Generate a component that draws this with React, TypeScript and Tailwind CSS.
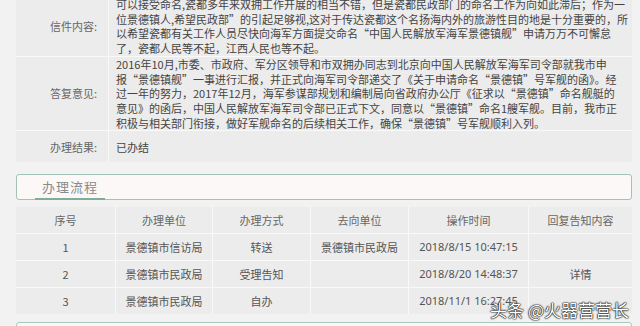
const letterLines = [
  "可以接受命名,瓷都多年来双拥工作开展的相当不错，但是瓷都民政部门的命名工作为向如此滞后；作为一",
  "位景德镇人,希望民政部”的引起足够视,这对于传达瓷都这个名扬海内外的旅游性目的地是十分重要的，所",
  "以希望瓷都有关工作人员尽快向海军方面提交命名“中国人民解放军海军景德镇舰”申请万万不可懈怠",
  "了，瓷都人民等不起，江西人民也等不起。",
];

const replyLines = [
  "2016年10月,市委、市政府、军分区领导和市双拥办同志到北京向中国人民解放军海军司令部就我市申",
  "报“景德镇舰”一事进行汇报，并正式向海军司令部递交了《关于申请命名“景德镇”号军舰的函》。经",
  "过一年的努力，2017年12月，海军参谋部规划和编制局向省政府办公厅《征求以“景德镇”命名舰艇的",
  "意见》的函后，中国人民解放军海军司令部已正式下文，同意以“景德镇”命名1艘军舰。目前，我市正",
  "积极与相关部门衔接，做好军舰命名的后续相关工作，确保“景德镇”号军舰顺利入列。",
];

const headers = ["序号", "办理单位", "办理方式", "去向单位", "操作时间", "回复告知内容"];

const flowRows = [
  ["1", "景德镇市信访局", "转送", "景德镇市民政局", "2018/8/15 10:47:15", ""],
  ["2", "景德镇市民政局", "受理告知", "", "2018/8/20 14:48:37", "详情"],
  ["3", "景德镇市民政局", "自办", "", "2018/11/1 16:27:45", ""],
];

const InfoRow = ({ label, lines }: { label: string; lines: string[] }) => (
  <div className="grid grid-cols-[92px_1fr] gap-px">
    <div className="bg-[#ececec] flex items-center justify-end pr-[11px] text-[#666]">{label}</div>
    <div className="bg-[#ececec] pl-[7px] text-[#444] leading-[14.7px] overflow-hidden">
      {lines.map((l) => (
        <div key={l} className="whitespace-nowrap">
          {l}
        </div>
      ))}
    </div>
  </div>
);

const App = () => {
  return (
    <div className="relative w-[640px] h-[326px] overflow-hidden bg-[#f2f2f2] text-[11px] font-['Noto_Sans_CJK_SC',sans-serif]">
      <div className="ml-4 w-[616px] -mt-[3px]">
        <div className="flex flex-col gap-px bg-[#f9f9f9]">
          <InfoRow label="信件内容:" lines={letterLines} />
          <InfoRow label="答复意见:" lines={replyLines} />
          <div className="grid grid-cols-[92px_1fr] gap-px h-[31px]">
            <div className="bg-[#ececec] flex items-center justify-end pr-[11px] text-[#666]">办理结果:</div>
            <div className="bg-[#ececec] flex items-center pl-[7px] text-[#444]">已办结</div>
          </div>
        </div>

        <div className="mt-3 h-[26px] border border-[#9fc4b4] rounded-[3px] bg-[#fcf8f7] flex items-center pl-[18px]">
          <span className="relative px-[7px] text-[13px] tracking-[1px] text-[#8a8a8a] leading-[24px]">
            办理流程
            <span className="absolute left-0 right-0 -bottom-[1px] h-[2px] bg-[#7fae96]" />
          </span>
        </div>

        <div className="mt-[7px] grid grid-cols-[99px_96px_97px_97px_119px_103px] gap-px bg-[#f9f9f9] text-[#555]">
          {headers.map((h) => (
            <div key={h} className="bg-[#ececec] h-[26px] flex items-center justify-center text-[#666]">
              {h}
            </div>
          ))}
          {flowRows.map((row) =>
            row.map((cell, i) => (
              <div
                key={row[0] + "-" + i}
                className={
                  i === 4
                    ? "bg-[#ececec] h-[26px] flex items-center justify-center font-['Noto_Sans','Noto_Sans_CJK_SC',sans-serif]"
                    : "bg-[#ececec] h-[26px] flex items-center justify-center"
                }
              >
                {cell}
              </div>
            ))
          )}
        </div>

        <div className="mt-2 h-[20px] border border-[#a6c9bd] rounded-[3px] bg-[#fcf8f7]" />
      </div>

      <div className="absolute right-[11px] bottom-[7px] text-[17px] text-white leading-[19px] [text-shadow:0_0_2px_#000,0_0_1px_#000,0_0_1px_#000]">
        头条 @火器营营长
      </div>
    </div>
  );
};

export default App;
